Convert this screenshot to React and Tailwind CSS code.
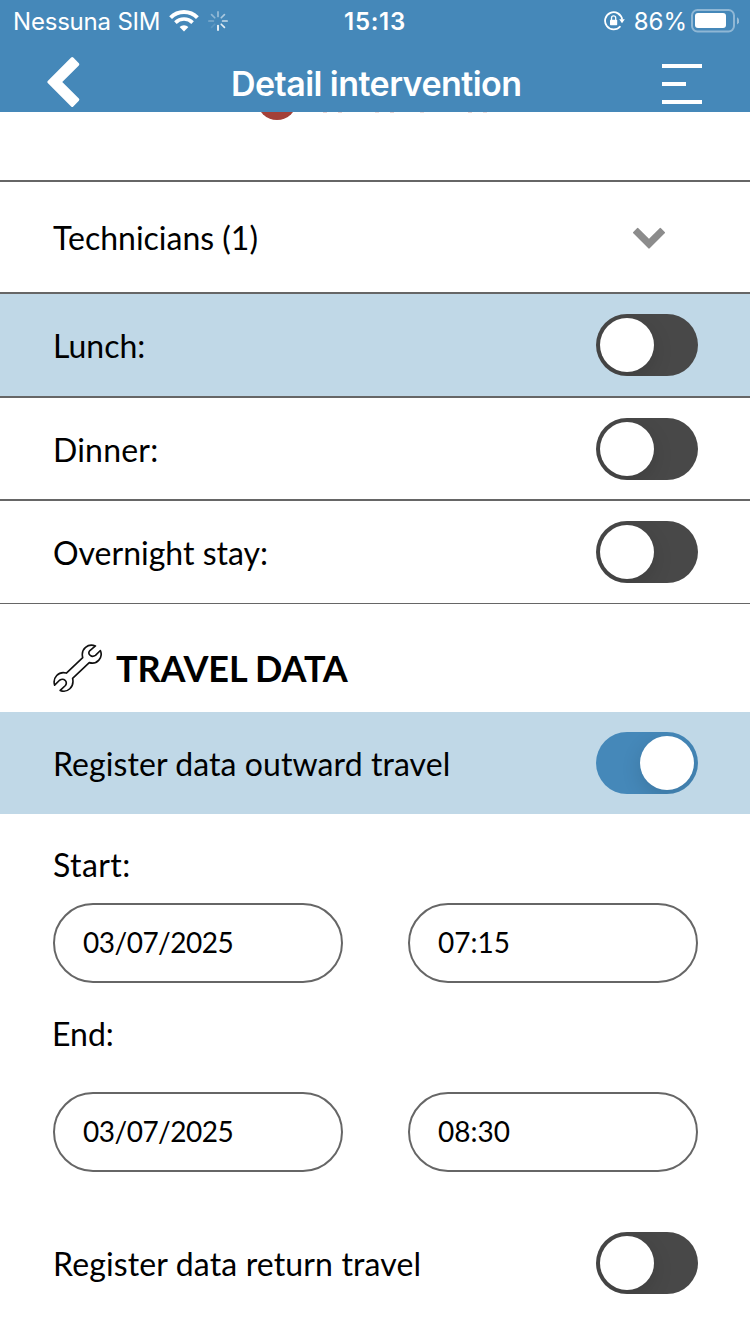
const RAYS = [
  { angle: 0, opacity: 0.45 },
  { angle: 45, opacity: 0.55 },
  { angle: 90, opacity: 0.7 },
  { angle: 135, opacity: 0.85 },
  { angle: 180, opacity: 1 },
  { angle: 225, opacity: 0.12 },
  { angle: 270, opacity: 0.3 },
  { angle: 315, opacity: 0.4 },
];

function WifiIcon() {
  return (
    <svg className="h-[22px] w-[30px]" viewBox="0 0 30 22" fill="none" stroke="white">
      <path d="M1.6 7.6a19 19 0 0 1 26.8 0" strokeWidth="4" />
      <path d="M6.4 12.6a12.2 12.2 0 0 1 17.2 0" strokeWidth="3.6" />
      <path d="M15 21.6l-4.4-4.5a6.4 6.4 0 0 1 8.8 0z" fill="white" stroke="none" />
    </svg>
  );
}

function Spinner() {
  return (
    <svg className="h-5 w-5" viewBox="0 0 20 20" stroke="white" strokeWidth="1.7" strokeLinecap="round">
      {RAYS.map(({ angle, opacity }) => (
        <path key={angle} d="M10 5.4V.9" opacity={opacity} transform={`rotate(${angle} 10 10)`} />
      ))}
    </svg>
  );
}

function RotationLockIcon() {
  return (
    <svg className="h-5 w-[21px]" viewBox="0 0 21 20" fill="none" stroke="white">
      <path d="M16.4 15.2A8.6 8.6 0 1 1 18.2 8.6" strokeWidth="1.8" />
      <path d="M15.2 8.2h5.6L18 12.2z" fill="white" stroke="none" />
      <rect x="6" y="8.8" width="7.2" height="5.4" rx="0.8" fill="white" stroke="none" />
      <path d="M7.5 9V7a2.1 2.1 0 0 1 4.2 0v2" strokeWidth="1.3" />
    </svg>
  );
}

function BatteryIcon() {
  return (
    <svg className="h-6 w-12" viewBox="0 0 48 24" fill="none">
      <rect x="1" y="1" width="42" height="21.5" rx="5.5" stroke="white" strokeOpacity="0.4" strokeWidth="2" />
      <rect x="4" y="4" width="31" height="15" rx="3" fill="white" />
      <path d="M46 8.2q2.2 1.2 2.2 3.6t-2.2 3.6z" fill="white" fillOpacity="0.45" />
    </svg>
  );
}

function BackIcon() {
  return (
    <svg className="h-[52px] w-[34px]" viewBox="0 0 34 52" fill="white" stroke="white" strokeWidth="3" strokeLinejoin="round">
      <path d="M26.2 2.6L31.8 8.4L14.2 26L31.8 43.6L26.2 49.4L2.8 26Z" />
    </svg>
  );
}

function ChevronIcon() {
  return (
    <svg className="h-[22px] w-8" viewBox="0 0 32 22" fill="#8c8c8c" stroke="#8c8c8c" strokeWidth="2" strokeLinejoin="round">
      <path d="M4.7 1.9L16 13.1L27.3 1.9L31 5.6L16 20.6L1 5.6Z" />
    </svg>
  );
}

function WrenchIcon() {
  return (
    <svg className="h-[49px] w-[49px]" viewBox="0 0 150 150" fill="none" stroke="#111" strokeWidth="5" strokeLinejoin="round">
      <path d="M130 6C108-3 84 14 91 42L41 89C17 82-2 104 5 126L20 111Q30 105 37 111Q44 118 38 127L22 142C44 151 66 132 60 105L111 57C135 64 154 42 145 20L130 35Q121 41 114 35Q106 28 113 20Z" />
    </svg>
  );
}

function Toggle({ on }) {
  return (
    <div
      className={`flex h-[62px] w-[102px] items-center overflow-hidden rounded-full px-1 ${
        on ? "justify-end bg-[#4588b9]" : "bg-[#484848]"
      }`}
    >
      <div className="h-[54px] w-[54px] rounded-full bg-white shadow-[0_6px_20px_rgba(0,0,0,0.13)]" />
    </div>
  );
}

function Row({ label, className = "", labelClass = "", children }) {
  return (
    <div className={`flex items-center justify-between pl-[53px] ${className}`}>
      <span className={`pt-0.5 ${labelClass}`}>{label}</span>
      {children}
    </div>
  );
}

function DateTimeFields({ date, time }) {
  return (
    <div className="flex justify-between pr-[52px] pl-[53px] text-[28px]">
      <div className="flex h-20 w-[290px] items-center rounded-full border-2 border-[#666] pb-0.5 pl-7 tracking-[-0.5px]">
        {date}
      </div>
      <div className="flex h-20 w-[290px] items-center rounded-full border-2 border-[#666] pb-0.5 pl-7">{time}</div>
    </div>
  );
}

export default function App() {
  return (
    <div className="h-[1334px] w-[750px] overflow-hidden bg-white font-['Lato',sans-serif] text-[32px] leading-10 text-black">
      <header className="h-28 bg-[#4588b9] font-['Inter',sans-serif] text-white">
        <div className="grid h-10 grid-cols-3 items-center text-[24px] leading-10">
          <div className="flex items-center pl-[13px]">
            <span className="w-[156px] pt-0.5 tracking-[-0.2px] whitespace-nowrap">Nessuna SIM</span>
            <WifiIcon />
            <div className="ml-[9px]">
              <Spinner />
            </div>
          </div>
          <div className="pt-0.5 text-center font-semibold tracking-[0.7px]">15:13</div>
          <div className="flex items-center justify-end pr-[11px]">
            <RotationLockIcon />
            <span className="mr-1 ml-[9px] pt-0.5">86%</span>
            <BatteryIcon />
          </div>
        </div>
        <div className="flex h-[72px] items-center pt-4 pr-12 pl-[46px]">
          <div className="-mt-1 w-[185px]">
            <BackIcon />
          </div>
          <h1 className="flex-1 text-[34px] font-semibold tracking-[-0.55px] whitespace-nowrap">Detail intervention</h1>
          <div className="flex h-10 w-10 flex-col justify-between">
            <div className="h-1 bg-white" />
            <div className="h-1 w-6 bg-white" />
            <div className="h-1 bg-white" />
          </div>
        </div>
      </header>

      <main>
        {/* tail of the status line scrolled under the header */}
        <div className="flex h-[68px] items-start overflow-hidden pl-[257px]">
          <div className="-mt-8 h-10 w-10 rounded-full bg-[#a34038]" />
          <div className="ml-[26px] flex h-px gap-[11px]">
            <div className="w-1 bg-[#ecd5d3]" />
            <div className="w-1 bg-[#ecd5d3]" />
            <div className="ml-[22px] w-1 bg-[#f1dfdd]" />
            <div className="w-1 bg-[#ecd5d3]" />
            <div className="ml-[15px] w-1 bg-[#f1dfdd]" />
            <div className="ml-[33px] w-1 bg-[#ecd5d3]" />
            <div className="w-1 bg-[#f1dfdd]" />
          </div>
        </div>
        <Row label="Technicians (1)" className="h-[112px] border-t-2 border-[#666] pr-[85px]">
          <div className="pt-0.5">
            <ChevronIcon />
          </div>
        </Row>
        <Row label="Lunch:" className="h-[104px] border-t-2 border-[#666] bg-[#c0d8e7] pr-[52px]">
          <Toggle />
        </Row>
        <Row label="Dinner:" labelClass="tracking-[0.2px]" className="h-[103px] border-t-2 border-[#666] pr-[52px]">
          <Toggle />
        </Row>
        <Row label="Overnight stay:" className="h-[105px] border-t-2 border-b border-[#666] pr-[52px]">
          <Toggle />
        </Row>
        <div className="flex h-[108px] items-center gap-[14px] pt-5 pl-[53px]">
          <WrenchIcon />
          <h2 className="text-[36px] font-bold tracking-[-0.1px]">TRAVEL DATA</h2>
        </div>
        <Row
          label="Register data outward travel"
          labelClass="tracking-[0.08px]"
          className="h-[102px] bg-[#c0d8e7] pr-[52px]"
        >
          <Toggle on />
        </Row>
        <div className="pt-[31px] pb-[18px] pl-[53px] tracking-[0.4px]">Start:</div>
        <DateTimeFields date="03/07/2025" time="07:15" />
        <div className="pt-[31px] pb-[38px] pl-[52px]">End:</div>
        <DateTimeFields date="03/07/2025" time="08:30" />
        <Row label="Register data return travel" labelClass="tracking-[0.14px]" className="mt-10 h-[102px] pr-[52px]">
          <Toggle />
        </Row>
      </main>
    </div>
  );
}
